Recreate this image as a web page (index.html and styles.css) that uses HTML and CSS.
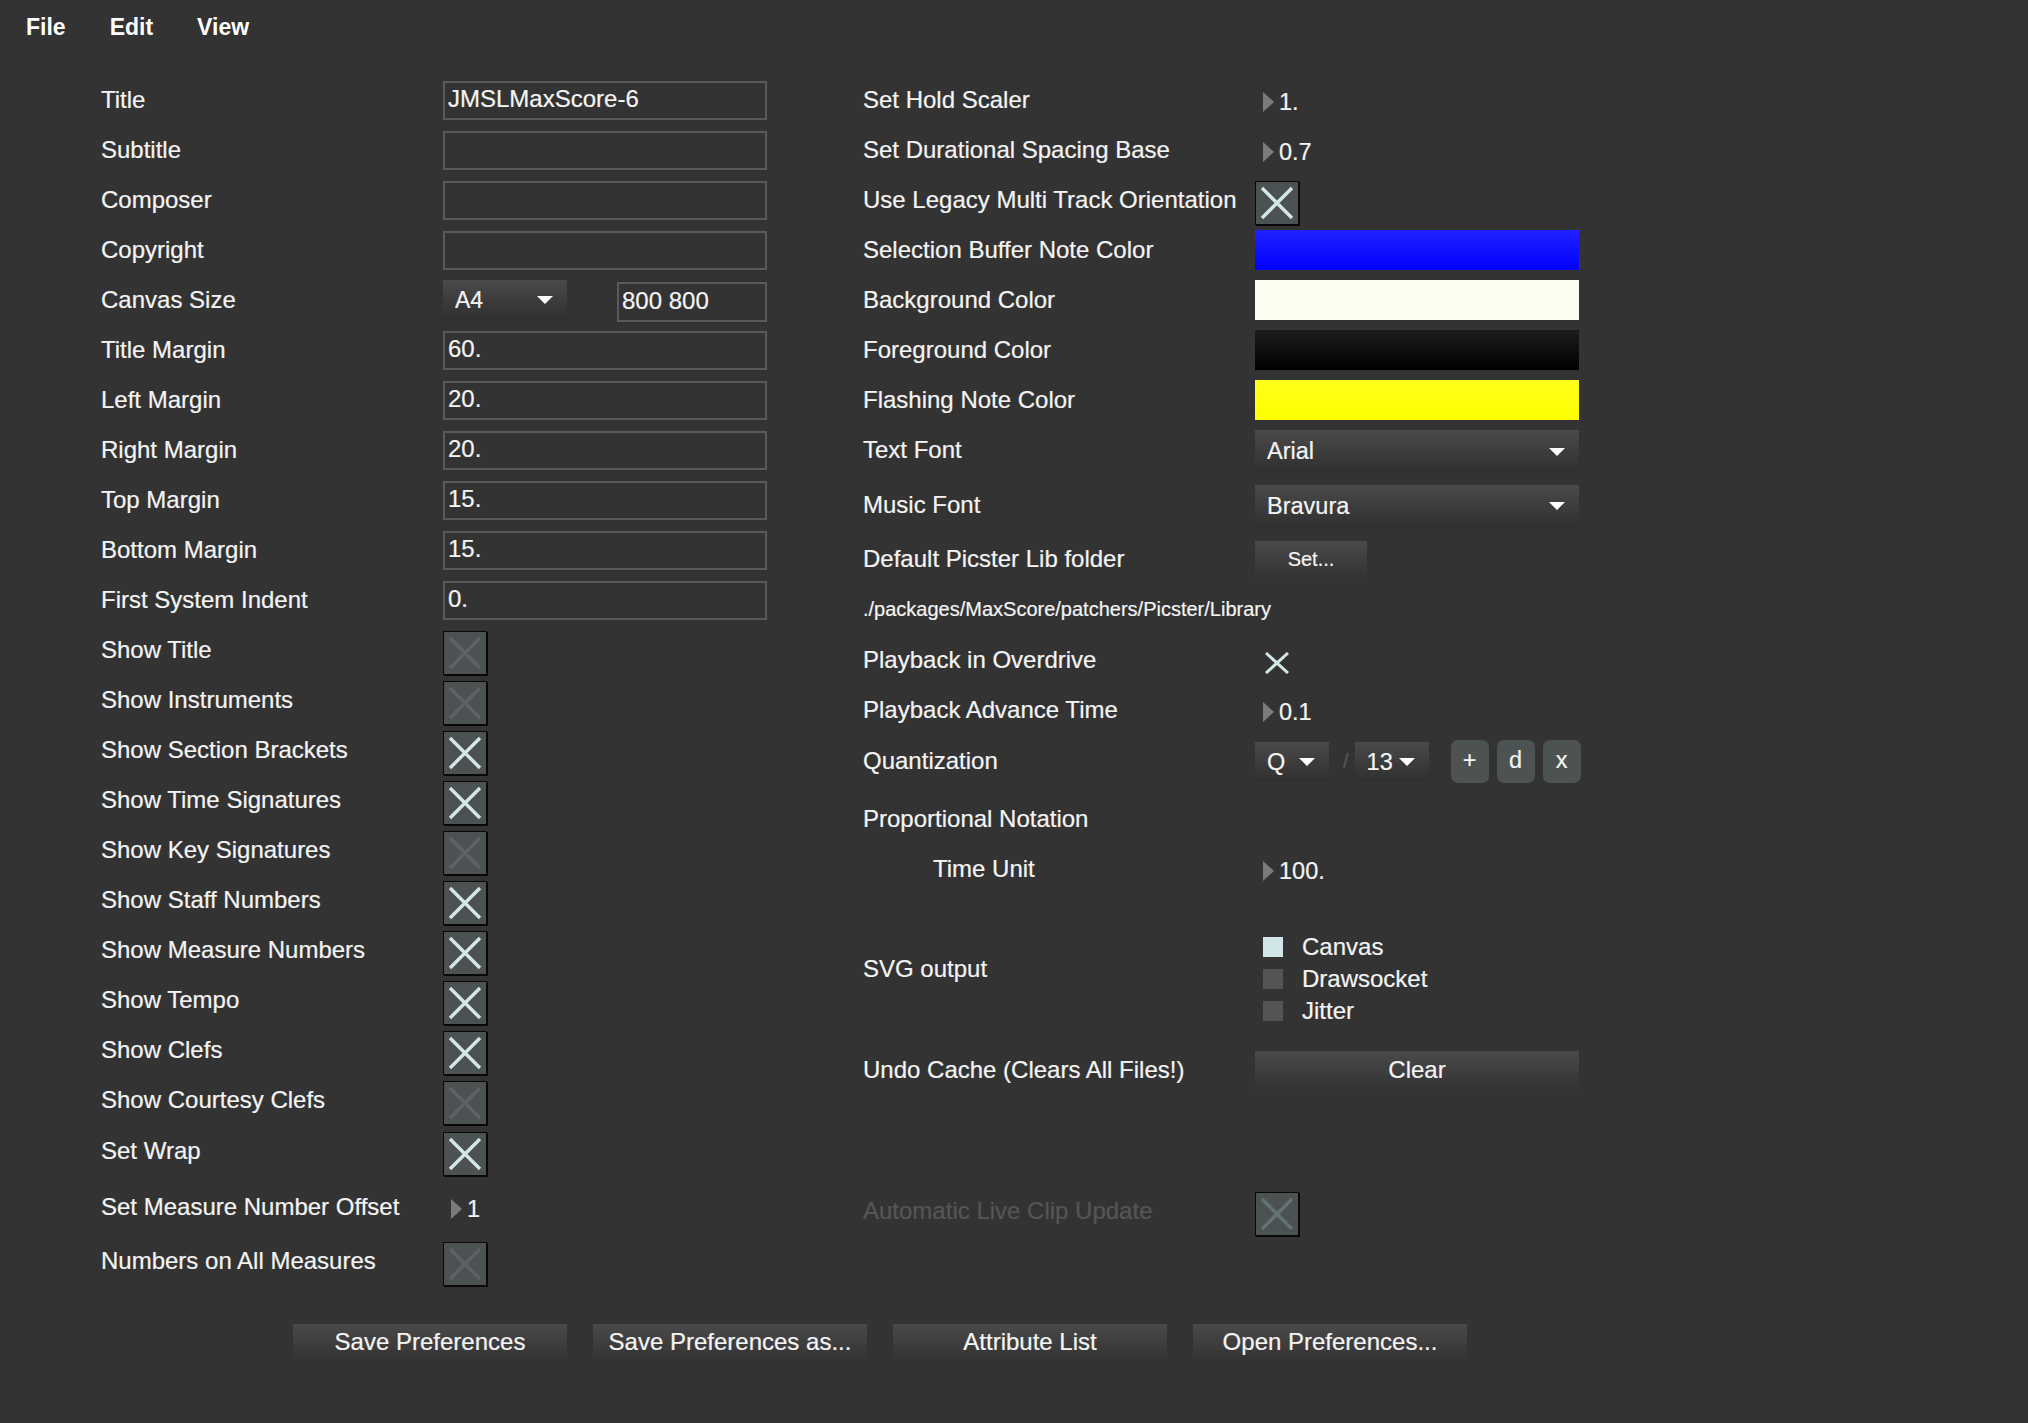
FILE: index.html
```html
<!DOCTYPE html>
<html lang="en">
<head>
<meta charset="utf-8">
<title>MaxScore Preferences</title>
<link rel="stylesheet" href="styles.css">
</head>
<body>
<div class="menubar">
  <span>File</span><span>Edit</span><span>View</span>
</div>

<div class="main">
  <div class="col col-left">
    <div class="row"><span class="label">Title</span><div class="field">JMSLMaxScore-6</div></div>
    <div class="row"><span class="label">Subtitle</span><div class="field"></div></div>
    <div class="row"><span class="label">Composer</span><div class="field"></div></div>
    <div class="row"><span class="label">Copyright</span><div class="field"></div></div>
    <div class="row"><span class="label">Canvas Size</span>
      <div class="dropdown a4"><span>A4</span><i class="arrow"></i></div>
      <div class="field size">800 800</div>
    </div>
    <div class="row"><span class="label">Title Margin</span><div class="field">60.</div></div>
    <div class="row"><span class="label">Left Margin</span><div class="field">20.</div></div>
    <div class="row"><span class="label">Right Margin</span><div class="field">20.</div></div>
    <div class="row"><span class="label">Top Margin</span><div class="field">15.</div></div>
    <div class="row"><span class="label">Bottom Margin</span><div class="field">15.</div></div>
    <div class="row"><span class="label">First System Indent</span><div class="field">0.</div></div>
    <div class="row"><span class="label">Show Title</span><div class="cb off"><svg viewBox="0 0 42 42"><path d="M6 6L36 36M36 6L6 36"/></svg></div></div>
    <div class="row"><span class="label">Show Instruments</span><div class="cb off"><svg viewBox="0 0 42 42"><path d="M6 6L36 36M36 6L6 36"/></svg></div></div>
    <div class="row"><span class="label">Show Section Brackets</span><div class="cb on"><svg viewBox="0 0 42 42"><path d="M6 6L36 36M36 6L6 36"/></svg></div></div>
    <div class="row"><span class="label">Show Time Signatures</span><div class="cb on"><svg viewBox="0 0 42 42"><path d="M6 6L36 36M36 6L6 36"/></svg></div></div>
    <div class="row"><span class="label">Show Key Signatures</span><div class="cb off"><svg viewBox="0 0 42 42"><path d="M6 6L36 36M36 6L6 36"/></svg></div></div>
    <div class="row"><span class="label">Show Staff Numbers</span><div class="cb on"><svg viewBox="0 0 42 42"><path d="M6 6L36 36M36 6L6 36"/></svg></div></div>
    <div class="row"><span class="label">Show Measure Numbers</span><div class="cb on"><svg viewBox="0 0 42 42"><path d="M6 6L36 36M36 6L6 36"/></svg></div></div>
    <div class="row"><span class="label">Show Tempo</span><div class="cb on"><svg viewBox="0 0 42 42"><path d="M6 6L36 36M36 6L6 36"/></svg></div></div>
    <div class="row"><span class="label">Show Clefs</span><div class="cb on"><svg viewBox="0 0 42 42"><path d="M6 6L36 36M36 6L6 36"/></svg></div></div>
    <div class="row"><span class="label">Show Courtesy Clefs</span><div class="cb off"><svg viewBox="0 0 42 42"><path d="M6 6L36 36M36 6L6 36"/></svg></div></div>
    <div class="row row-wrap"><span class="label">Set Wrap</span><div class="cb on"><svg viewBox="0 0 42 42"><path d="M6 6L36 36M36 6L6 36"/></svg></div></div>
    <div class="row row-offset"><span class="label">Set Measure Number Offset</span><div class="num">1</div></div>
    <div class="row row-numbers"><span class="label">Numbers on All Measures</span><div class="cb off"><svg viewBox="0 0 42 42"><path d="M6 6L36 36M36 6L6 36"/></svg></div></div>
  </div>

  <div class="col col-right">
    <div class="row"><span class="label">Set Hold Scaler</span><div class="num">1.</div></div>
    <div class="row"><span class="label">Set Durational Spacing Base</span><div class="num">0.7</div></div>
    <div class="row"><span class="label">Use Legacy Multi Track Orientation</span><div class="cb on"><svg viewBox="0 0 42 42"><path d="M6 6L36 36M36 6L6 36"/></svg></div></div>
    <div class="row"><span class="label">Selection Buffer Note Color</span><div class="swatch blue"></div></div>
    <div class="row"><span class="label">Background Color</span><div class="swatch ivory"></div></div>
    <div class="row"><span class="label">Foreground Color</span><div class="swatch black"></div></div>
    <div class="row"><span class="label">Flashing Note Color</span><div class="swatch yellow"></div></div>
    <div class="row"><span class="label">Text Font</span><div class="dropdown wide"><span>Arial</span><i class="arrow"></i></div></div>
    <div class="row row-music"><span class="label">Music Font</span><div class="dropdown wide"><span>Bravura</span><i class="arrow"></i></div></div>
    <div class="row"><span class="label">Default Picster Lib folder</span><div class="btn set">Set...</div></div>
    <div class="row"><span class="path">./packages/MaxScore/patchers/Picster/Library</span></div>
    <div class="row row-overdrive"><span class="label">Playback in Overdrive</span><svg class="x-bare" viewBox="0 0 24 22"><path d="M1 1L23 21M23 1L1 21"/></svg></div>
    <div class="row row-advance"><span class="label">Playback Advance Time</span><div class="num">0.1</div></div>
    <div class="row row-quant"><span class="label">Quantization</span>
      <div class="dropdown q"><span>Q</span><i class="arrow"></i></div>
      <span class="slash">/</span>
      <div class="dropdown q"><span>13</span><i class="arrow"></i></div>
      <div class="tiny-btns">
        <span class="tiny">+</span><span class="tiny">d</span><span class="tiny">x</span>
      </div>
    </div>
    <div class="row row-prop"><span class="label">Proportional Notation</span></div>
    <div class="row row-unit"><span class="label indent">Time Unit</span><div class="num">100.</div></div>
    <div class="row row-svg"><span class="label">SVG output</span>
      <div class="radios">
        <div class="radio"><i class="sq sel"></i><span>Canvas</span></div>
        <div class="radio"><i class="sq"></i><span>Drawsocket</span></div>
        <div class="radio"><i class="sq"></i><span>Jitter</span></div>
      </div>
    </div>
    <div class="row row-undo"><span class="label">Undo Cache (Clears All Files!)</span><div class="btn clear">Clear</div></div>
    <div class="row row-auto"><span class="label dim">Automatic Live Clip Update</span><div class="cb faint"><svg viewBox="0 0 42 42"><path d="M6 6L36 36M36 6L6 36"/></svg></div></div>
  </div>
</div>

<div class="footer">
  <div class="btn foot">Save Preferences</div>
  <div class="btn foot">Save Preferences as...</div>
  <div class="btn foot">Attribute List</div>
  <div class="btn foot">Open Preferences...</div>
</div>
</body>
</html>
```

FILE: styles.css
```css
* { box-sizing: border-box; }

body {
  margin: 0;
  width: 2028px;
  height: 1423px;
  overflow: hidden;
  background: #333333;
  color: #f4f4f4;
  font-family: "Liberation Sans", Arial, Helvetica, sans-serif;
  -webkit-text-stroke: 0.2px currentColor;
}

.menubar {
  height: 54px;
  display: flex;
  align-items: center;
  gap: 44px;
  padding-left: 26px;
  font-size: 23px;
  font-weight: bold;
  color: #ffffff;
  -webkit-text-stroke: 0;
}

.main {
  display: flex;
  padding: 21px 0 0 101px;
}

.col-left { width: 762px; }
.col-right { width: 740px; }

.row {
  display: flex;
  align-items: center;
  height: 50px;
}

.label {
  flex: none;
  font-size: 24px;
  white-space: nowrap;
}
.col-left .label { width: 342px; }
.col-right .label { width: 392px; }
.label.indent { padding-left: 70px; }
.label.dim { color: #565656; }

.row-wrap { height: 52px; }
.row-offset { height: 60px; }
.row-numbers { height: 48px; }

.row-music { height: 59px; }
.row-overdrive { height: 52px; }
.row-advance { height: 48px; }
.row-quant { height: 54px; }
.row-prop { height: 62px; }
.row-unit { height: 38px; }
.row-svg { height: 162px; }
.row-undo { height: 40px; }
.row-auto { height: 50px; margin-top: 96px; }

/* text fields */
.field {
  width: 324px;
  height: 39px;
  border: 2px solid #5a5a5a;
  padding-left: 3px;
  padding-bottom: 2px;
  font-size: 24px;
  display: flex;
  align-items: center;
  white-space: nowrap;
}
.field.size {
  width: 150px;
  height: 40px;
  margin-left: 50px;
  margin-top: 4px;
}

/* dropdowns */
.dropdown {
  display: flex;
  align-items: center;
  justify-content: space-between;
  height: 40px;
  padding: 0 14px 0 12px;
  background: linear-gradient(#4a4a4a, #2f2f2f);
  font-size: 23.5px;
}
.dropdown.a4 { width: 124px; font-size: 23px; }
.dropdown.wide { width: 324px; height: 43px; margin-top: 3px; }
.dropdown.q { width: 74px; margin-top: 2px; }

.arrow {
  width: 0;
  height: 0;
  border-left: 8px solid transparent;
  border-right: 8px solid transparent;
  border-top: 8px solid #ffffff;
}
.dropdown.wide .arrow {
  border-left-width: 8.5px;
  border-right-width: 8.5px;
}

.slash {
  color: #575757;
  font-size: 20px;
  margin: 0 6px 0 14px;
}

.tiny-btns {
  display: flex;
  gap: 8px;
  margin-left: 22px;
}
.tiny {
  width: 38px;
  height: 43px;
  border-radius: 7px;
  background: #4d5252;
  display: flex;
  align-items: center;
  justify-content: center;
  font-size: 23.5px;
  padding-bottom: 2px;
}

/* checkboxes */
.cb {
  width: 44px;
  height: 44px;
  border: 1px solid #080808;
  box-shadow: 1px 1px 0 #080808;
  background: #4c5251;
  margin-top: 5px;
}
.cb svg {
  display: block;
  width: 42px;
  height: 42px;
}
.cb path, .x-bare path {
  fill: none;
  stroke-width: 3.4;
}
.cb.on path { stroke: #d3e7e7; }
.cb.off path { stroke: #5e6264; }
.cb.faint path { stroke: #637373; }

.x-bare {
  width: 24px;
  height: 22px;
  margin-left: 10px;
  margin-top: 5px;
}
.x-bare path { stroke: #d3e7e7; stroke-width: 3; }

/* number boxes */
.num {
  display: flex;
  align-items: center;
  margin-left: 8px;
  margin-top: 4px;
  font-size: 23.5px;
}
.num::before {
  content: "";
  width: 0;
  height: 0;
  border-left: 11px solid #7b7b7b;
  border-top: 10.5px solid transparent;
  border-bottom: 10.5px solid transparent;
  margin-right: 5px;
}

/* colour swatches */
.swatch { width: 324px; height: 40px; }
.swatch.blue { background: linear-gradient(#2222ff, #0000ff); }
.swatch.ivory { background: #fdfdf1; }
.swatch.black { background: linear-gradient(#1c1c1c, #000000); }
.swatch.yellow { background: linear-gradient(#ffff1c, #ffff00); }

.path {
  font-size: 20px;
  white-space: nowrap;
}

/* buttons */
.btn {
  display: flex;
  align-items: center;
  justify-content: center;
  background: linear-gradient(#4a4a4a, #333333);
  white-space: nowrap;
}
.btn.set { width: 112px; height: 37px; font-size: 20px; }
.btn.clear { width: 324px; height: 38px; font-size: 24px; }
.btn.foot { width: 274px; height: 36px; font-size: 24px; }

/* radio group */
.radios {
  display: flex;
  flex-direction: column;
  margin-top: 20px;
}
.radio {
  display: flex;
  align-items: center;
  height: 32px;
  font-size: 24px;
}
.sq {
  width: 20px;
  height: 20px;
  background: #555555;
  margin: 0 19px 0 8px;
}
.sq.sel { background: #d2e5e9; }

.footer {
  display: flex;
  gap: 26px;
  padding-left: 293px;
  margin-top: 39px;
}
```
